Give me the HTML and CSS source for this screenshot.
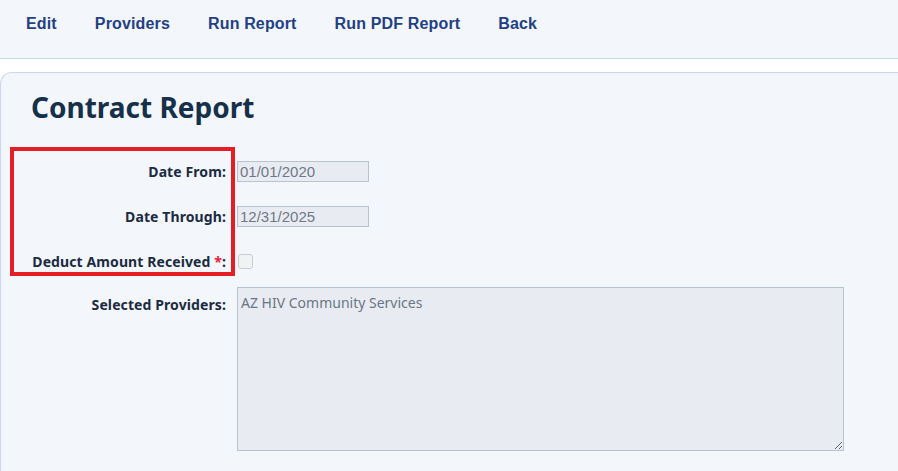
FILE: index.html
```html
<!DOCTYPE html>
<html>
<head>
  <title>Contract Report</title>
  <link rel="stylesheet" href="styles.css">
</head>
<body>

  <nav class="toolbar">
    <a href="#">Edit</a>
    <a href="#">Providers</a>
    <a href="#">Run Report</a>
    <a href="#">Run PDF Report</a>
    <a href="#">Back</a>
  </nav>

  <div class="panel">
    <h1>Contract Report</h1>

    <div class="form">
      <div class="highlight"></div>

      <div class="form-row">
        <label class="form-label">Date From:</label>
        <input class="date-input" type="text" value="01/01/2020" readonly>
      </div>

      <div class="form-row">
        <label class="form-label">Date Through:</label>
        <input class="date-input" type="text" value="12/31/2025" readonly>
      </div>

      <div class="form-row">
        <label class="form-label">Deduct Amount Received <span class="req">*</span>:</label>
        <span class="check"></span>
      </div>

      <div class="form-row top">
        <label class="form-label">Selected Providers:</label>
        <textarea class="providers" readonly>AZ HIV Community Services</textarea>
      </div>
    </div>
  </div>

</body>
</html>
```

FILE: styles.css
```css
body {
  margin: 0;
  background: #fff;
  font-family: 'Noto Sans', 'Open Sans', sans-serif;
  color: #1b2b42;
}

.toolbar {
  display: flex;
  height: 59px;
  box-sizing: border-box;
  padding: 14px 7px 0;
  background: #f3f6fb;
  border-bottom: 1px solid #c9d8ea;
}

.toolbar a {
  padding: 0 19px;
  color: #234083;
  font-family: 'Liberation Sans', Arial, sans-serif;
  font-weight: bold;
  font-size: 16px;
  letter-spacing: 0.15px;
  line-height: 20px;
  text-decoration: none;
}

.panel {
  position: relative;
  margin-top: 13px;
  min-height: 399px;
  box-sizing: border-box;
  padding: 14px 0 0 30px;
  background: #f3f6fb;
  border: 1px solid #c9d8ea;
  border-right: none;
  border-bottom: none;
  border-radius: 12px 0 0 0;
}

h1 {
  margin: 0;
  font-size: 28px;
  line-height: 40px;
  font-weight: 700;
  color: #16304a;
}

.form {
  padding-top: 22px;
}

.form-row {
  display: flex;
  align-items: center;
  gap: 11px;
  padding: 12px 0;
}

.form-row.top {
  align-items: flex-start;
  padding: 3px 0 0;
}

.form-label {
  width: 195px;
  flex: none;
  text-align: right;
  font-weight: 700;
  font-size: 14px;
  letter-spacing: 0.1px;
  line-height: 21px;
  color: #1b2b42;
}

.form-row.top .form-label {
  padding-top: 7px;
}

.req {
  color: #e8213a;
}

.date-input {
  width: 132px;
  height: 21px;
  box-sizing: border-box;
  margin: 0;
  padding: 0 2px;
  background: #e8ecf2;
  border: 1px solid #b8c3cf;
  border-radius: 0;
  font-family: 'Liberation Sans', Arial, sans-serif;
  font-size: 15px;
  color: #6f7886;
  outline: none;
}

.check {
  width: 13px;
  height: 13px;
  margin: 0 0 0 1px;
  background: #f1f2f4;
  border: 1px solid #c9ccd1;
  border-radius: 3px;
}

.providers {
  width: 607px;
  height: 164px;
  box-sizing: border-box;
  margin: 0;
  padding: 5px 3px;
  background: #e8ecf2;
  border: 1px solid #b8c3cf;
  border-radius: 0;
  font-family: 'Noto Sans', 'Open Sans', sans-serif;
  font-size: 14px;
  color: #6b7584;
  outline: none;
}

/* red callout drawn over the first three fields */
.highlight {
  position: absolute;
  left: 9px;
  top: 74px;
  width: 225px;
  height: 129px;
  box-sizing: border-box;
  border: 4px solid #e41e24;
  pointer-events: none;
}
```
